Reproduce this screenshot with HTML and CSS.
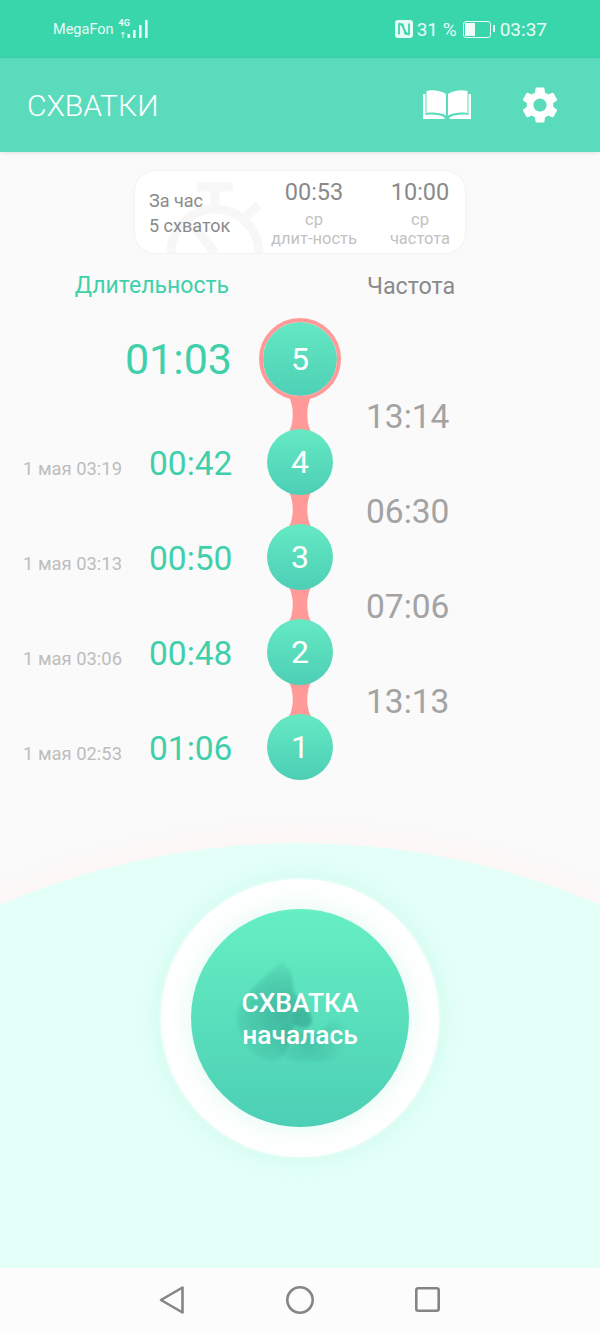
FILE: index.html
```html
<!DOCTYPE html>
<html lang="ru">
<head>
    <meta charset="UTF-8">
    <meta name="viewport" content="width=device-width, initial-scale=1.0">
    <title>Схватки</title>
    <link rel="stylesheet" href="styles.css">
</head>
<body>
    <div class="status-bar">
        <div class="status-left">
            <span class="carrier">MegaFon</span>
            <div class="signal">
                <span class="net-type">4G</span>
                <svg class="signal-bars" width="30" height="20" viewBox="0 0 30 20">
                    <path d="M3 15l2-2 2 2M5 13v6" fill="none" stroke="#dff8f0" stroke-width="1"/>
                    <rect x="9.500" y="15" width="2.600" height="4" fill="#e8fbf5"/>
                    <rect x="15" y="11" width="2.600" height="8" fill="#e8fbf5"/>
                    <rect x="21" y="6" width="2.600" height="13" fill="#e8fbf5"/>
                    <rect x="27" y="1" width="2.600" height="18" fill="#e8fbf5"/>
                </svg>
            </div>
        </div>
        <div class="status-right">
            <svg width="18" height="18" viewBox="0 0 18 18">
                <rect width="18" height="18" rx="3" fill="#e8fbf5"/>
                <path d="M4 3.500v11M4 3.500c3 0 5 4 6.500 11M14 14.500v-11M14 14.500c-3 0-5-4-6.500-11" fill="none" stroke="#3ad6ab" stroke-width="1.800"/>
            </svg>
            <span class="battery-pct">31 %</span>
            <div class="battery"><div class="battery-level"></div></div>
            <span class="clock">03:37</span>
        </div>
    </div>

    <header class="app-bar">
        <h1>СХВАТКИ</h1>
        <svg class="book-icon" width="48" height="30" viewBox="0 0 48 30">
            <path d="M3.500 1C10 -.5 17 .5 23 4v21.500c-6-3-13-3.500-19.500-2.500z" fill="#fff"/>
            <path d="M44.500 1C38 -.5 31 .5 25 4v21.500c6-3 13-3.500 19.500-2.500z" fill="#fff"/>
            <path d="M0 4h2.500v21c6-1 14-.5 19 2.500V29H0zM48 4h-2.500v21c-6-1-14-.5-19 2.500V29H48z" fill="#fff"/>
        </svg>
        <svg class="gear-icon" width="44" height="44" viewBox="0 0 24 24">
            <path fill="#fff" d="M19.14 12.94c.04-.3.06-.61.06-.94 0-.32-.02-.64-.07-.94l2.03-1.58a.49.49 0 0 0 .12-.61l-1.92-3.32a.488.488 0 0 0-.59-.22l-2.39.96c-.5-.38-1.03-.7-1.62-.94l-.36-2.54a.484.484 0 0 0-.48-.41h-3.84c-.24 0-.43.17-.47.41l-.36 2.54c-.59.24-1.13.57-1.62.94l-2.39-.96c-.22-.08-.47 0-.59.22L2.74 8.87c-.12.21-.08.47.12.61l2.03 1.58c-.05.3-.09.63-.09.94s.02.64.07.94l-2.03 1.58a.49.49 0 0 0-.12.61l1.92 3.32c.12.22.37.29.59.22l2.39-.96c.5.38 1.03.7 1.62.94l.36 2.54c.05.24.24.41.48.41h3.84c.24 0 .44-.17.47-.41l.36-2.54c.59-.24 1.13-.56 1.62-.94l2.39.96c.22.08.47 0 .59-.22l1.92-3.32c.12-.22.07-.47-.12-.61l-2.01-1.58zM12 15.6c-1.98 0-3.6-1.62-3.6-3.6s1.62-3.6 3.6-3.6 3.6 1.62 3.6 3.6-1.62 3.6-3.6 3.6z"/>
        </svg>
    </header>

    <main class="content">
        <div class="summary">
            <!-- stopwatch watermark behind the text -->
            <svg class="summary-watch" width="120" height="82" viewBox="0 0 120 82">
                <g fill="none" stroke="#f7f7f7" stroke-width="9">
                    <circle cx="55" cy="82" r="44"/>
                    <path d="M55 38V18M37 16h36M85 46l14-12"/>
                    <path d="M55 82L33 54"/>
                </g>
            </svg>
            <div class="summary-hour">
                <div>За час</div>
                <div>5 схваток</div>
            </div>
            <div class="summary-stat stat-duration">
                <div class="stat-value">00:53</div>
                <div class="stat-label">ср<br>длит-ность</div>
            </div>
            <div class="summary-stat stat-frequency">
                <div class="stat-value">10:00</div>
                <div class="stat-label">ср<br>частота</div>
            </div>
        </div>

        <div class="headings">
            <div class="heading-duration">Длительность</div>
            <div class="heading-frequency">Частота</div>
        </div>

        <div class="timeline">
            <div class="durations">
                <div class="duration-row current"><span class="duration">01:03</span></div>
                <div class="duration-row"><span class="date">1 мая 03:19</span><span class="duration">00:42</span></div>
                <div class="duration-row"><span class="date">1 мая 03:13</span><span class="duration">00:50</span></div>
                <div class="duration-row"><span class="date">1 мая 03:06</span><span class="duration">00:48</span></div>
                <div class="duration-row"><span class="date">1 мая 02:53</span><span class="duration">01:06</span></div>
            </div>

            <div class="nodes">
                <div class="node current"><span>5</span></div>
                <svg class="link" width="24" height="35" viewBox="0 0 24 35"><path d="M1 0h22c-5 10-5 25 0 35H1c5-10 5-25 0-35z"/></svg>
                <div class="node"><span>4</span></div>
                <svg class="link" width="24" height="35" viewBox="0 0 24 35"><path d="M1 0h22c-5 10-5 25 0 35H1c5-10 5-25 0-35z"/></svg>
                <div class="node"><span>3</span></div>
                <svg class="link" width="24" height="35" viewBox="0 0 24 35"><path d="M1 0h22c-5 10-5 25 0 35H1c5-10 5-25 0-35z"/></svg>
                <div class="node"><span>2</span></div>
                <svg class="link" width="24" height="35" viewBox="0 0 24 35"><path d="M1 0h22c-5 10-5 25 0 35H1c5-10 5-25 0-35z"/></svg>
                <div class="node"><span>1</span></div>
            </div>

            <div class="frequencies">
                <div class="frequency">13:14</div>
                <div class="frequency">06:30</div>
                <div class="frequency">07:06</div>
                <div class="frequency">13:13</div>
            </div>
        </div>
    </main>

    <section class="action">
        <div class="hill"></div>
        <div class="start-ring">
            <button class="start-button">
                <!-- faint silhouette behind the label, sharp on the right, fading to the left -->
                <svg class="start-figure" width="218" height="218" viewBox="0 0 218 218">
                    <defs>
                        <radialGradient id="figure-main" gradientUnits="userSpaceOnUse" cx="92" cy="104" r="62">
                            <stop offset="0" stop-color="#2f9f8a" stop-opacity=".6"/>
                            <stop offset=".55" stop-color="#2f9f8a" stop-opacity=".3"/>
                            <stop offset="1" stop-color="#2f9f8a" stop-opacity="0"/>
                        </radialGradient>
                        <radialGradient id="figure-low" gradientUnits="userSpaceOnUse" cx="118" cy="130" r="40">
                            <stop offset="0" stop-color="#2f9f8a" stop-opacity=".42"/>
                            <stop offset="1" stop-color="#2f9f8a" stop-opacity="0"/>
                        </radialGradient>
                        <filter id="figure-blur" x="-20%" y="-20%" width="140%" height="140%"><feGaussianBlur stdDeviation="1.500"/></filter>
                    </defs>
                    <g filter="url(#figure-blur)">
                        <path d="M91 53c6 5 9 10 10 15 2 6 0 11 3 16 3 6 8 9 10 14 4 4 7 8 7 13 0 5-4 8-7 8-5 0-8-3-12-3 0 14-8 36-20 36-18 0-36-22-36-44 0-20 28-40 45-55z" fill="url(#figure-main)"/>
                        <path d="M96 114c12 2 14 10 30 10 5 0 9-8 13-11 4-2 9-4 12-2 4 6 4 14 3 20-1 8-3 14-5 17-14 6-40 6-54 2-10-4-10-30 1-36z" fill="url(#figure-low)"/>
                        <path d="M104 104c3-3 8-5 10-6 4 4 7 8 7 13 0 5-4 8-7 8-5 0-8-3-12-3-2-4-1-9 2-12z" fill="#2f9f8a" opacity=".3"/>
                    </g>
                </svg>
                <span class="start-label">СХВАТКА<br>началась</span>
            </button>
        </div>
    </section>

    <nav class="nav-bar">
        <svg width="26" height="30" viewBox="0 0 26 30"><path d="M23.500 2.500v25L2 15z" fill="none" stroke="#858585" stroke-width="2.600" stroke-linejoin="round"/></svg>
        <svg width="30" height="30" viewBox="0 0 30 30"><circle cx="15" cy="15" r="12.700" fill="none" stroke="#858585" stroke-width="2.600"/></svg>
        <svg width="26" height="26" viewBox="0 0 26 26"><rect x="1.300" y="1.300" width="22.400" height="22.400" rx="2" fill="none" stroke="#858585" stroke-width="2.600"/></svg>
    </nav>
</body>
</html>
```

FILE: styles.css
```css
body {
    font-family: Roboto, "Noto Sans", sans-serif;
    background-color: #fafafa;
    margin: 0;
    height: 1332px;
    overflow: hidden;
    display: flex;
    flex-direction: column;
}

/* status bar */
.status-bar {
    height: 58px;
    background-color: #3ad6ab;
    color: #e8fbf5;
    display: flex;
    justify-content: space-between;
    align-items: center;
    padding: 0 53px;
    box-sizing: border-box;
}

.status-left, .status-right {
    display: flex;
    align-items: center;
}

.carrier {
    font-size: 14.5px;
}

.signal {
    position: relative;
    width: 30px;
    height: 20px;
    margin-left: 4px;
}

.net-type {
    position: absolute;
    left: 1px;
    top: -1px;
    font-size: 9px;
    font-weight: 700;
    line-height: 10px;
}

.signal-bars {
    position: absolute;
    left: 0;
    top: 0;
}

.battery-pct {
    font-size: 19px;
    margin-left: 4px;
}

.battery {
    width: 24px;
    height: 13px;
    margin-left: 6px;
    border: 1px solid #e8fbf5;
    border-radius: 3px;
    padding: 1px;
    position: relative;
}

.battery::after {
    content: "";
    position: absolute;
    right: -5px;
    top: 3px;
    width: 2px;
    height: 7px;
    background-color: #e8fbf5;
}

.battery-level {
    width: 10px;
    height: 100%;
    background-color: #f1fdf9;
}

.clock {
    font-size: 19px;
    margin-left: 9px;
}

/* app bar */
.app-bar {
    height: 94px;
    background-color: #5adcbc;
    display: flex;
    align-items: center;
    padding-left: 27px;
    box-shadow: 0 1px 4px rgba(0, 0, 0, 0.1);
}

.app-bar h1 {
    color: #fff;
    font-size: 30px;
    font-weight: 300;
    margin: 0;
    flex: 1;
}

.book-icon {
    margin-right: 47px;
}

.gear-icon {
    margin-right: 38px;
}

/* summary card */
.content {
    padding-top: 19px;
}

.summary {
    position: relative;
    width: 330px;
    height: 82px;
    margin: 0 auto;
    box-sizing: border-box;
    background-color: #fff;
    border-radius: 20px;
    box-shadow: 0 0 2px rgba(0, 0, 0, 0.1);
    overflow: hidden;
    display: flex;
    color: #8a8a8a;
}

.summary-watch {
    position: absolute;
    left: 25px;
    top: 0;
}

.summary-hour {
    position: relative;
    width: 136px;
    padding: 17px 0 0 14px;
    box-sizing: border-box;
    font-size: 18px;
    line-height: 25px;
}

.summary-stat {
    position: relative;
    text-align: center;
}

.stat-duration {
    width: 86px;
    margin-right: 28px;
}

.stat-frequency {
    width: 70px;
}

.stat-value {
    font-size: 23.500px;
    line-height: 28px;
    margin-top: 7px;
}

.stat-label {
    font-size: 16.500px;
    line-height: 19px;
    color: #c2c2c2;
    margin-top: 4px;
    white-space: nowrap;
}

/* column headings */
.headings {
    display: flex;
    font-size: 23px;
    line-height: 30px;
    margin-top: 18px;
}

.heading-duration {
    width: 229px;
    text-align: right;
    color: #3fd0ab;
}

.heading-frequency {
    margin-left: 138px;
    color: #8a8a8a;
    font-size: 23.300px;
}

/* timeline */
.timeline {
    display: grid;
    grid-template-columns: 259px 82px 1fr;
    margin-top: 17px;
}

.durations {
    display: flex;
    flex-direction: column;
    gap: 29px;
    padding-right: 27px;
}

.duration-row {
    height: 66px;
    display: flex;
    justify-content: flex-end;
    align-items: center;
    padding-top: 2px;
    box-sizing: border-box;
}

.duration-row.current {
    height: 82px;
    padding-top: 0;
}

.date {
    font-size: 18.400px;
    color: #bdbdbd;
    margin-right: 27px;
    padding-top: 10px;
}

.duration {
    font-size: 33.500px;
    color: #3fd0ab;
    width: 83px;
    text-align: right;
}

.current .duration {
    font-size: 43px;
    width: auto;
}

.nodes {
    display: flex;
    flex-direction: column;
    align-items: center;
}

.link {
    margin: -3px 0;
    fill: #ff9a98;
}

.node {
    position: relative;
    width: 66px;
    height: 66px;
    border-radius: 50%;
    background: linear-gradient(#66e9c3, #4ccfb5);
    color: #fff;
    font-size: 32px;
    display: flex;
    align-items: center;
    justify-content: center;
}

.node.current {
    width: 82px;
    height: 82px;
    box-sizing: border-box;
    border: 4px solid #ff9a98;
    background-origin: border-box;
    background-clip: padding-box;
}

.frequencies {
    padding: 51px 0 0 25px;
}

.frequency {
    height: 95px;
    line-height: 95px;
    font-size: 33.500px;
    color: #a3a3a3;
}

/* start button area */
.action {
    position: relative;
    height: 460px;
    margin-top: auto;
    overflow: hidden;
    display: flex;
    justify-content: center;
    align-items: flex-start;
}

.hill {
    position: absolute;
    left: -457px;
    top: 35px;
    width: 1514px;
    height: 1514px;
    border-radius: 50%;
    background-color: #e4fff8;
    box-shadow: 0 -4px 30px 2px #fff6f4;
}

.start-ring {
    position: relative;
    width: 278px;
    height: 278px;
    margin-top: 71px;
    border-radius: 50%;
    background-color: #fff;
    box-shadow: 0 0 4px #fff, 0 0 26px rgba(120, 235, 205, 0.25);
    display: flex;
    align-items: center;
    justify-content: center;
}

.start-button {
    position: relative;
    width: 218px;
    height: 218px;
    padding: 0;
    border: none;
    border-radius: 50%;
    background: linear-gradient(#66efc3, #4ccfb5);
    box-shadow: 0 0 24px rgba(190, 245, 230, 0.5);
    overflow: hidden;
    font-family: inherit;
}

.start-figure {
    position: absolute;
    left: 0;
    top: 0;
}

.start-label {
    position: relative;
    display: block;
    color: #fff;
    font-size: 26.400px;
    font-weight: 500;
    line-height: 32px;
    padding-top: 1px;
}

/* bottom nav */
.nav-bar {
    height: 64px;
    flex-shrink: 0;
    background-color: #fcfcfc;
    display: flex;
    align-items: center;
    justify-content: center;
    gap: 100px;
}
```
